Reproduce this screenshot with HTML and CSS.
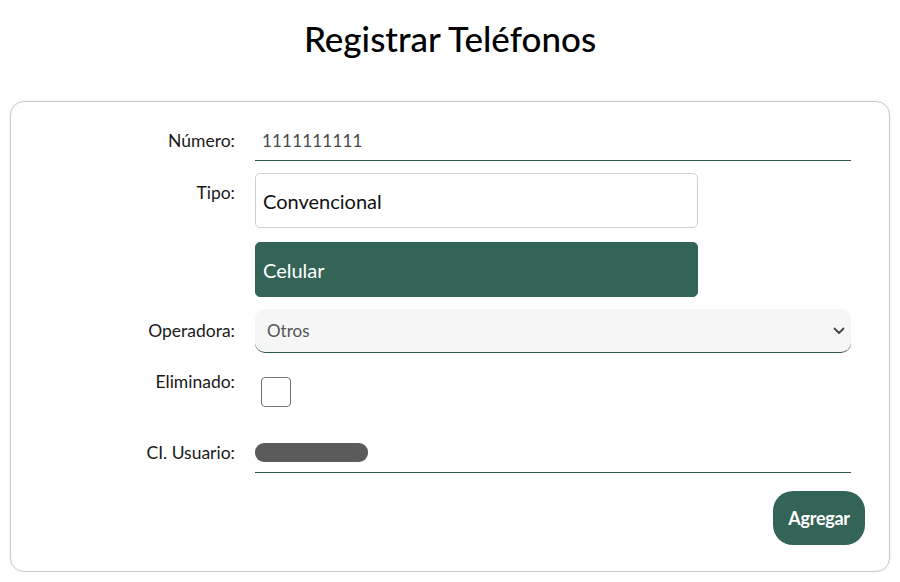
FILE: index.html
```html
<!DOCTYPE html>
<html lang="es">
<head>
<meta charset="utf-8">
<title>Registrar Teléfonos</title>
<link rel="stylesheet" href="styles.css">
</head>
<body>
<div class="page">
  <h1 class="title">Registrar Teléfonos</h1>
  <form class="card">
    <div class="grid">
      <label class="lbl lbl-num">Número:</label>
      <div class="line-input"><span class="value">1111111111</span></div>

      <label class="lbl lbl-tipo">Tipo:</label>
      <div class="options">
        <div class="opt">Convencional</div>
        <div class="opt opt-active">Celular</div>
      </div>

      <label class="lbl lbl-op">Operadora:</label>
      <div class="select">
        <span class="select-text">Otros</span>
        <svg class="chev" width="12" height="8" viewBox="0 0 12 8"><path d="M1.5 1.5 L6 6 L10.5 1.5" fill="none" stroke="#444" stroke-width="1.8" stroke-linecap="round" stroke-linejoin="round"/></svg>
      </div>

      <label class="lbl lbl-elim">Eliminado:</label>
      <div class="check-wrap"><span class="check"></span></div>

      <label class="lbl lbl-ci">CI. Usuario:</label>
      <div class="line-input line-ci"><span class="redact"></span></div>
    </div>
    <div class="actions">
      <button type="button" class="btn">Agregar</button>
    </div>
  </form>
</div>
</body>
</html>
```
FILE: styles.css
```css
* { box-sizing: border-box; }
body {
  margin: 0;
  background: #fff;
  font-family: "Lato", "Open Sans", sans-serif;
  color: #111;
}
.page {
  padding: 0 10px;
}
.title {
  margin: 16px 0 41px;
  height: 44px;
  line-height: 44px;
  text-align: center;
  font-size: 35px;
  font-weight: 500;
  color: #000;
}
.card {
  display: block;
  border: 1px solid #c9c9c9;
  border-radius: 14px;
  box-shadow: 0 0 2px rgba(0,0,0,0.12);
  padding: 18px 38px 26px 0;
}
.grid {
  display: grid;
  grid-template-columns: 224px 1fr;
  column-gap: 20px;
  align-items: start;
}
.lbl {
  text-align: right;
  font-size: 17.5px;
  line-height: 24px;
  color: #1a1a1a;
}
.lbl-num { margin-top: 9px; }
.lbl-tipo { margin-top: 20px; }
.lbl-op { margin-top: 22px; }
.lbl-elim { margin-top: 17px; }
.lbl-ci { margin-top: 34px; }

.line-input {
  height: 41px;
  border-bottom: 1px solid #2f5a50;
  padding-left: 7px;
  display: flex;
  align-items: center;
}
.line-ci { margin-top: 25px; }
.value {
  font-size: 17px;
  color: #4a4a4a;
  letter-spacing: 0.2px;
}
.options {
  margin-top: 12px;
  width: 443px;
  display: flex;
  flex-direction: column;
  gap: 14px;
}
.opt {
  height: 55px;
  border: 1px solid #cfcfcf;
  border-radius: 5px;
  padding-left: 7px;
  display: flex;
  align-items: center;
  font-size: 20px;
  color: #111;
}
.opt-active {
  background: #346357;
  border-color: #346357;
  color: #fff;
}
.select {
  margin-top: 12px;
  height: 44px;
  background: #f6f6f6;
  border-radius: 10px;
  border-bottom: 1px solid #2f5a50;
  display: flex;
  align-items: center;
  justify-content: space-between;
  padding: 0 6px 0 12px;
}
.select-text {
  font-size: 17px;
  color: #555;
}
.chev { display: block; }
.check-wrap {
  margin-top: 17px;
  height: 37px;
  padding-top: 7px;
  padding-left: 6px;
}
.check {
  display: block;
  width: 30px;
  height: 30px;
  border: 1px solid #767676;
  border-radius: 4px;
  background: #fff;
}
.redact {
  display: block;
  width: 113px;
  height: 19px;
  margin-left: -7px;
  margin-top: 1px;
  border-radius: 9px;
  background: #5b5b5c;
}
.actions {
  display: flex;
  justify-content: flex-end;
  margin-top: 18px;
  margin-right: -14px;
}
.btn {
  width: 92px;
  height: 54px;
  border: none;
  border-radius: 20px;
  background: #346357;
  color: #fff;
  font-family: "Lato", sans-serif;
  font-weight: 700;
  font-size: 18px;
  letter-spacing: -0.3px;
}
```
